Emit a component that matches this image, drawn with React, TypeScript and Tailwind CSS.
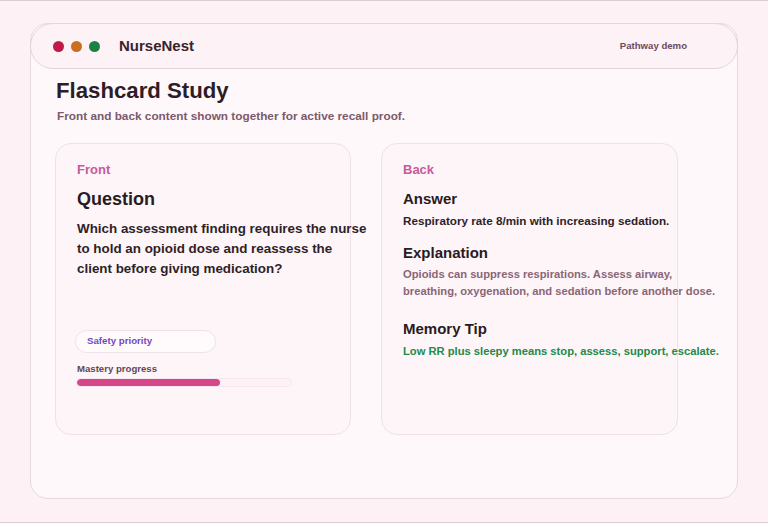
export default function App() {
  return (
    <div
      className="h-[523px] w-full overflow-hidden border-y border-[#dccdd4] bg-[#fdf1f5] pt-[22px]"
      style={{ fontFamily: '"Liberation Sans", Arial, sans-serif' }}
    >
      <div className="ml-[30px] h-[476px] w-[708px] rounded-[18px] border border-[#ead6df] bg-[#fef8fb]">
        <header className="-mx-px -mt-px flex h-[46px] items-center rounded-[23px] border border-[#e8d3dc] bg-[#fdf2f6] pl-[22px] pr-[50px]">
          <div className="flex items-center gap-[7px]">
            <span className="h-[11px] w-[11px] rounded-full bg-[#c01a4a]" />
            <span className="h-[11px] w-[11px] rounded-full bg-[#cb6e1f]" />
            <span className="h-[11px] w-[11px] rounded-full bg-[#1f8046]" />
          </div>
          <span className="ml-[19px] text-[15px] font-bold text-[#38232e]">NurseNest</span>
          <span className="ml-auto text-[9.6px] font-bold text-[#6b4b5b]">Pathway demo</span>
        </header>

        <div className="px-[24px]">
          <h1 className="mt-[8px] pl-px text-[22.2px] font-bold leading-[28px] text-[#2e1d26]">Flashcard Study</h1>
          <p className="mt-[3px] pl-[2px] text-[11.8px] font-bold leading-[16px] text-[#7b5a6b]">
            Front and back content shown together for active recall proof.
          </p>

          <div className="mt-[19px] flex gap-[30px]">
            <FrontCard />
            <BackCard />
          </div>
        </div>
      </div>
    </div>
  )
}

function FrontCard() {
  return (
    <section className="h-[292px] w-[296px] rounded-[16px] border border-[#f0e1e8] bg-[#fdf5f8] px-[21px] pt-[18px]">
      <p className="text-[13px] font-bold leading-[16px] text-[#c9589d]">Front</p>
      <h2 className="mt-[10px] text-[18px] font-bold leading-[22px] text-[#2a1a22]">Question</h2>
      <p className="mt-[9px] w-[292px] text-[13.4px] font-bold leading-[20px] text-[#2f1f28]">
        Which assessment finding requires the nurse to hold an opioid dose and reassess the client before giving medication?
      </p>
      <div className="-ml-[2px] mt-[51px] flex h-[23px] w-[141px] items-center rounded-full border border-[#f0e1e8] bg-[#fffbfd] px-[11px]">
        <span className="text-[9.7px] font-bold text-[#7448c3]">Safety priority</span>
      </div>
      <p className="mt-[10px] text-[9.6px] font-bold leading-[12px] text-[#5f4755]">Mastery progress</p>
      <div className="-ml-px mt-[3px] h-[9px] w-[216px] overflow-hidden rounded-full border border-[#f6e8ee] bg-[#fdf3f7]">
        <div className="h-full rounded-full bg-[#d6478a]" style={{ width: '67%' }} />
      </div>
    </section>
  )
}

function BackCard() {
  return (
    <section className="h-[292px] w-[297px] rounded-[16px] border border-[#f0e1e8] bg-[#fdf5f8] px-[21px] pt-[18px]">
      <p className="text-[13px] font-bold leading-[16px] text-[#c9589d]">Back</p>
      <h2 className="mt-[11px] text-[15px] font-bold leading-[20px] text-[#2a1a22]">Answer</h2>
      <p className="mt-[4px] whitespace-nowrap text-[11.7px] font-bold leading-[16px] text-[#2f1f28]">
        Respiratory rate 8/min with increasing sedation.
      </p>
      <h2 className="mt-[14px] text-[15px] font-bold leading-[20px] text-[#2a1a22]">Explanation</h2>
      <p className="mt-[3px] w-[318px] text-[11.2px] font-bold leading-[17px] text-[#8a6677]">
        Opioids can suppress respirations. Assess airway, breathing, oxygenation, and sedation before another dose.
      </p>
      <h2 className="mt-[19px] text-[15px] font-bold leading-[20px] text-[#2a1a22]">Memory Tip</h2>
      <p className="mt-[4px] whitespace-nowrap text-[11.2px] font-bold leading-[16px] text-[#228a4b]">
        Low RR plus sleepy means stop, assess, support, escalate.
      </p>
    </section>
  )
}
